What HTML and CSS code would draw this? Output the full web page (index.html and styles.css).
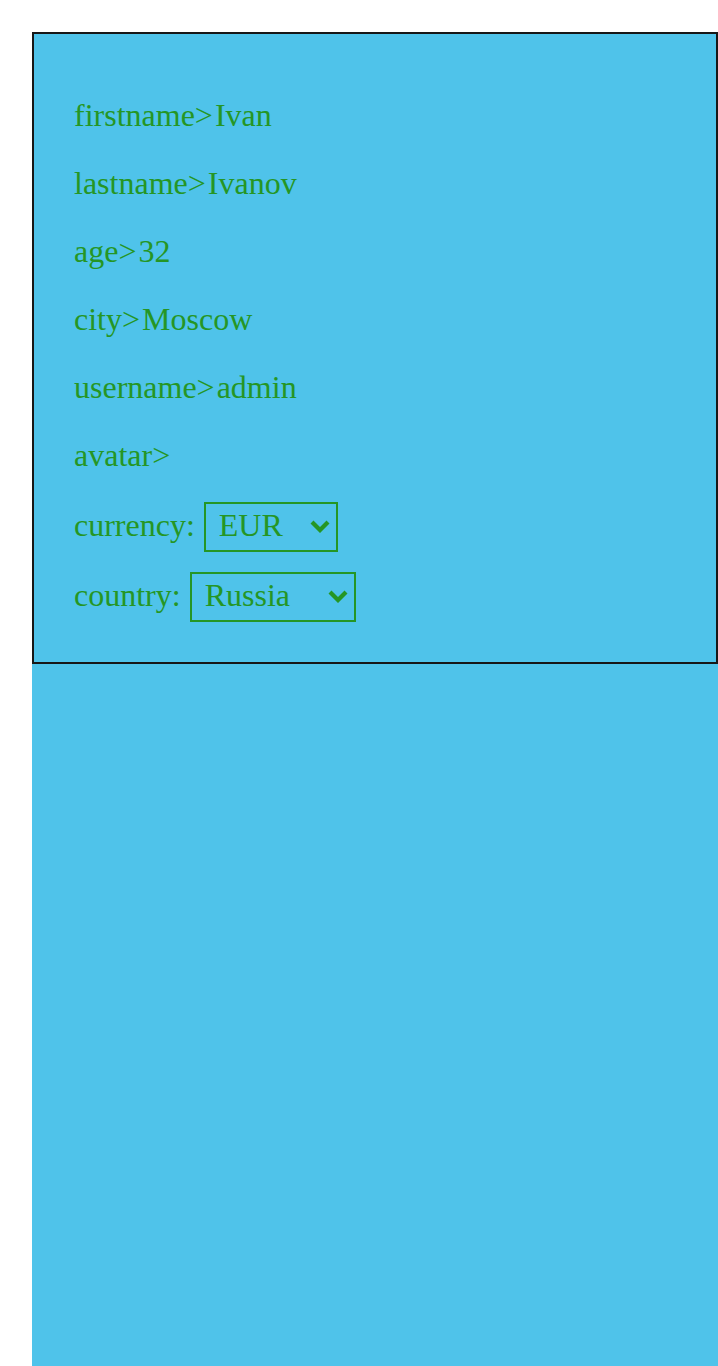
FILE: index.html
```html
<!DOCTYPE html>
<html lang="en">
<head>
<meta charset="utf-8">
<title>Profile</title>
<link rel="stylesheet" href="styles.css">
</head>
<body>
<main class="page">
  <section class="profile">
    <div class="fields">
      <div class="field"><span>firstname&gt;</span><span>Ivan</span></div>
      <div class="field"><span>lastname&gt;</span><span>Ivanov</span></div>
      <div class="field"><span>age&gt;</span><span>32</span></div>
      <div class="field"><span>city&gt;</span><span>Moscow</span></div>
      <div class="field"><span>username&gt;</span><span>admin</span></div>
      <div class="field"><span>avatar&gt;</span></div>
    </div>
    <div class="choices">
      <div class="choice">
        <label for="currency">currency:</label>
        <span class="picker picker-currency">
          <select id="currency" class="select"><option>EUR</option><option>USD</option><option>RUB</option></select>
          <svg class="arrow" viewBox="0 0 20 14" aria-hidden="true"><path d="M0.500 3.500L3.500 0.500L10 7L16.500 0.500L19.500 3.500L10 13Z"/></svg>
        </span>
      </div>
      <div class="choice">
        <label for="country">country:</label>
        <span class="picker picker-country">
          <select id="country" class="select"><option>Russia</option><option>Armenia</option></select>
          <svg class="arrow" viewBox="0 0 20 14" aria-hidden="true"><path d="M0.500 3.500L3.500 0.500L10 7L16.500 0.500L19.500 3.500L10 13Z"/></svg>
        </span>
      </div>
    </div>
  </section>
</main>
</body>
</html>
```
FILE: styles.css
```css
* {
  box-sizing: border-box;
}

body {
  margin: 0;
  padding: 32px 0 0 32px;
  min-height: 100vh;
  display: flex;
  background: #fff;
  color: #259625;
  font-family: "Liberation Serif", serif;
  font-size: 32px;
  line-height: 36px;
}

.page {
  flex: 1;
  background: #4fc3ea;
}

.profile {
  padding: 40px;
  border: 2px solid #171717;
}

.fields {
  display: grid;
  gap: 32px;
  padding: 23px 0 29px;
}

.field {
  display: flex;
  flex-wrap: wrap;
  gap: 2px;
}

.choices {
  display: grid;
  gap: 20px;
}

.choice {
  display: flex;
  align-items: baseline;
  gap: 9px;
}

.picker {
  display: grid;
}

.picker-currency {
  width: 134px;
}

.picker-country {
  width: 166px;
}

.select {
  grid-area: 1 / 1;
  appearance: none;
  width: 100%;
  height: 50px;
  margin: 0;
  padding: 0 13px 4px;
  border: 2px solid #259625;
  border-radius: 0;
  background: transparent;
  color: inherit;
  font: inherit;
}

.arrow {
  grid-area: 1 / 1;
  place-self: center end;
  width: 20px;
  height: 14px;
  margin-right: 8px;
  fill: #259625;
  pointer-events: none;
}
```
